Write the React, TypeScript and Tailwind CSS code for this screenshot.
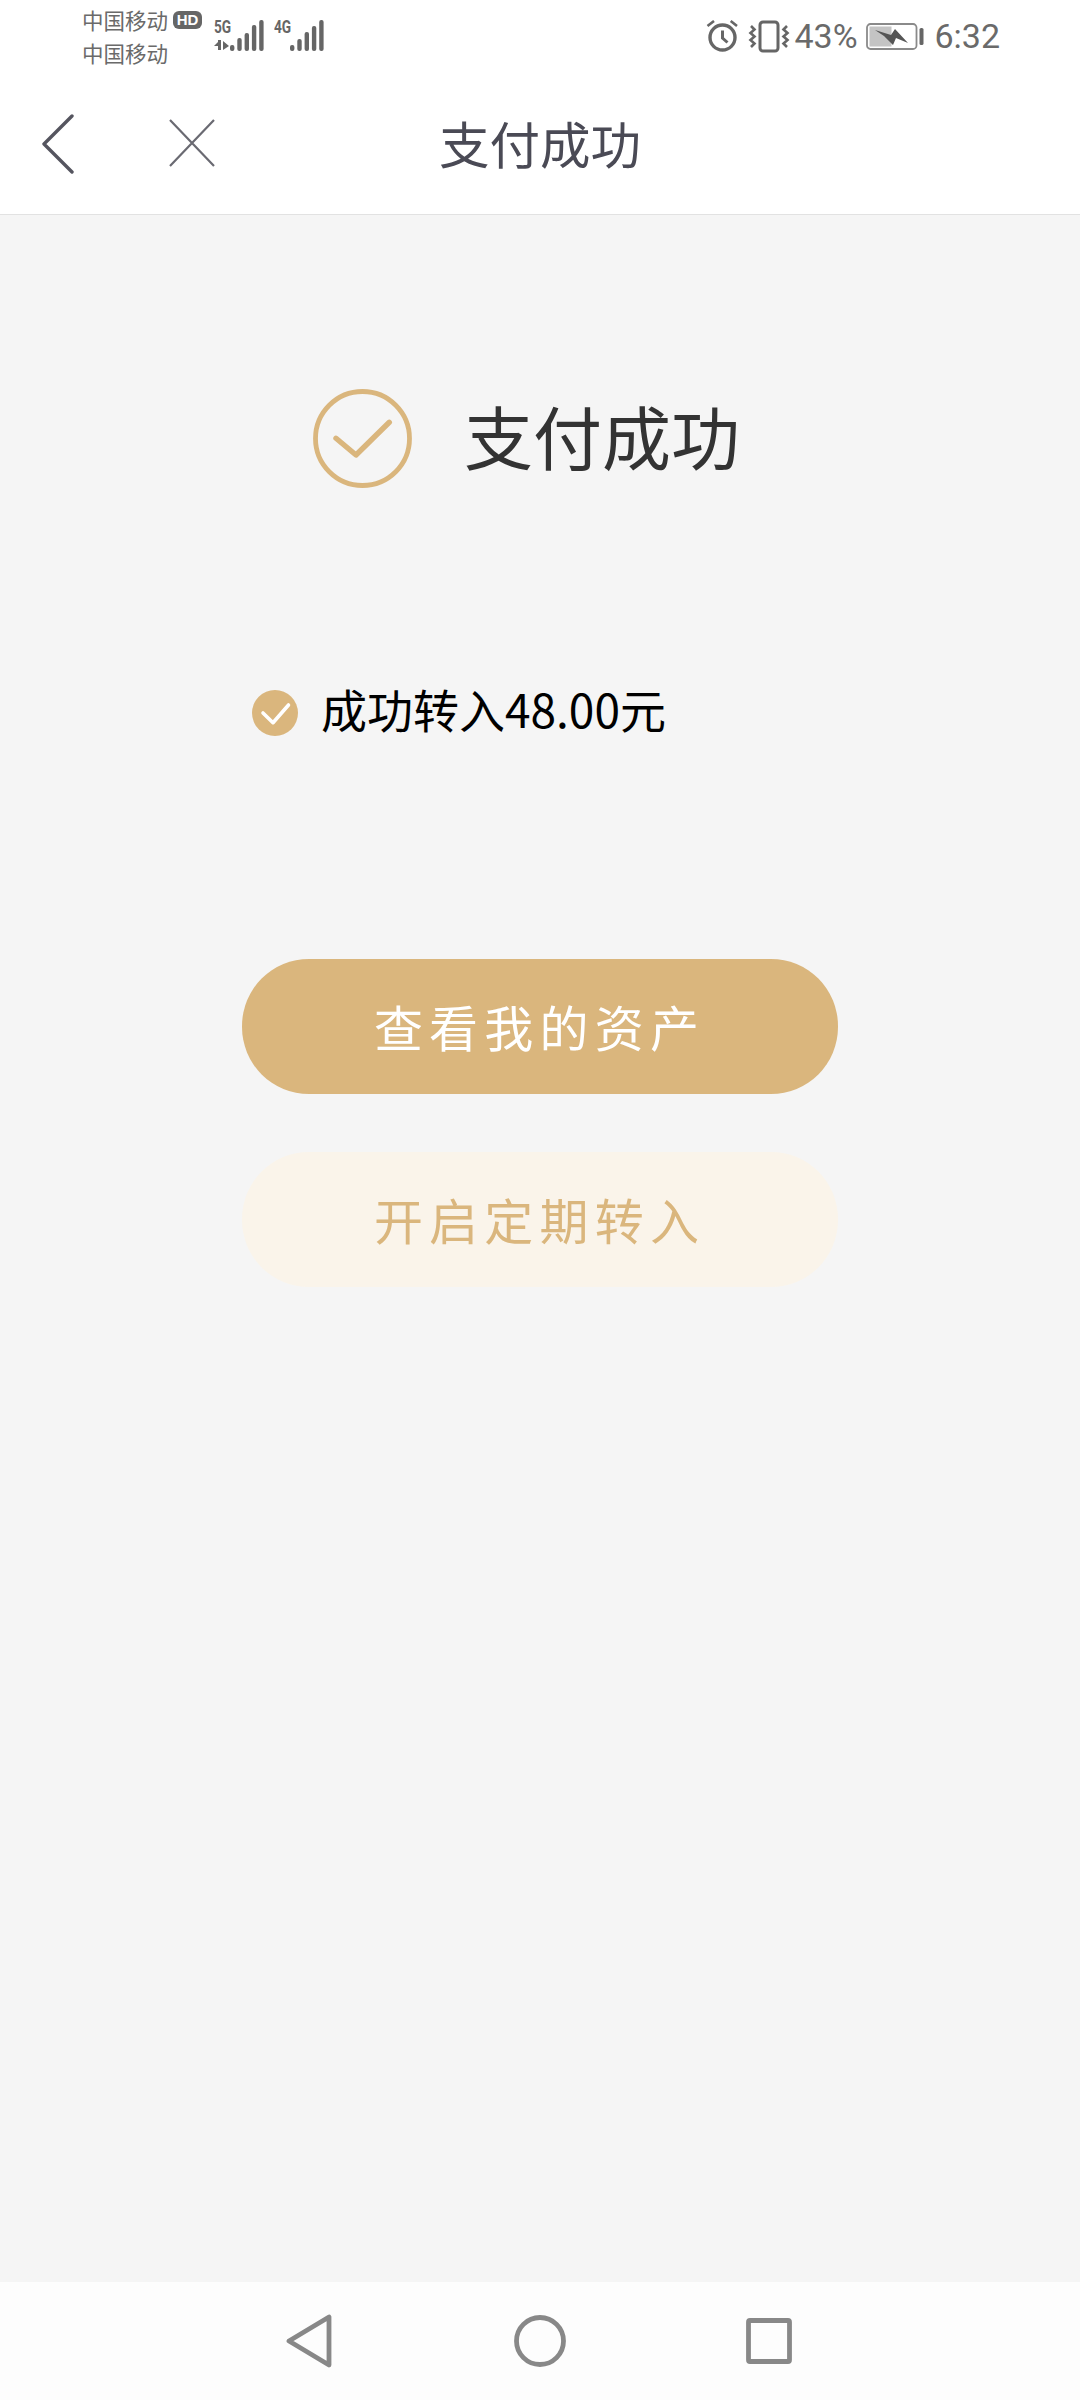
import * as React from "react";

const cjk = "font-['Noto_Sans_CJK_SC','Noto_Sans',sans-serif]";

function SignalBars({ tops, offset }: { tops: number[]; offset: number }) {
  return (
    <svg width="36" height="32" viewBox="0 0 36 32" className="block">
      {tops.map((top, i) => (
        <rect key={i} x={offset + i * 7.3} y={top} width="4.4" height={31 - top} rx="2" fill="#666" />
      ))}
    </svg>
  );
}

function NetworkLabel({ label, arrows }: { label: string; arrows?: boolean }) {
  return (
    <div className="flex h-[32px] w-[16px] flex-col">
      <span className="block origin-left scale-x-[0.76] font-['Roboto',sans-serif] text-[18px] leading-[14px] font-bold whitespace-nowrap text-[#666]">
        {label}
      </span>
      {arrows && (
        <svg width="16" height="11" viewBox="0 0 16 11" className="mt-[6px] block" fill="#666">
          <rect x="4" y="0" width="3" height="10" />
          <path d="M0 6l4-4v4zM9 1l6 5-6 4z" />
        </svg>
      )}
    </div>
  );
}

function StatusBar() {
  return (
    <div className="flex h-[70px] items-start justify-between bg-white pl-[82px] pr-[80px] text-[#6a6a6a]">
      <div className="flex">
        <div className={`flex w-[132px] flex-col pt-[3px] text-[21.5px] leading-[33px] ${cjk}`}>
          <div className="flex items-center">
            中国移动
            <span className="ml-[5px] flex h-[18px] w-[29px] items-center justify-center rounded-[6px] bg-[#666] font-['Liberation_Sans',sans-serif] text-[15px] leading-none font-bold text-white">
              HD
            </span>
          </div>
          <div>中国移动</div>
        </div>
        <div className="flex pt-[20px]">
          <NetworkLabel label="5G" arrows />
          <SignalBars tops={[25, 18, 13, 5, 0]} offset={0} />
          <div className="w-[8px]" />
          <NetworkLabel label="4G" />
          <SignalBars tops={[25, 19, 12, 6, 0]} offset={0} />
        </div>
      </div>
      <div className="flex items-start pt-[20px]">
        <svg width="32" height="33" viewBox="0 0 32 33" fill="none" stroke="#666" strokeWidth="3.4" className="block">
          <circle cx="16.5" cy="17.5" r="12.5" />
          <path d="M16.5 10.5v7.5l5 4.5" strokeWidth="3" />
          <path d="M1.5 6 8 1M31 6 24.7 1" strokeWidth="2.6" />
        </svg>
        <svg width="42" height="33" viewBox="0 0 42 33" fill="none" stroke="#666" className="ml-[10px] block">
          <rect x="12" y="2" width="18" height="29" rx="3" strokeWidth="3" />
          <path d="M3 6l3.5 3.5-4 3.5 4 3.5-4 3.5 4 3.5L3 27" strokeWidth="2.6" />
          <path d="M39 6l-3.5 3.5 4 3.5-4 3.5 4 3.5-4 3.5L39 27" strokeWidth="2.6" />
        </svg>
        <span className="ml-[4px] w-[61px] font-['Roboto',sans-serif] text-[34px] leading-[32px] whitespace-nowrap">43%</span>
        <svg width="58" height="27" viewBox="0 0 58 27" className="mt-[3px] ml-[11px] block">
          <rect x="1" y="1" width="49.5" height="25" rx="3.5" fill="none" stroke="#8a8a8a" strokeWidth="1.8" />
          <rect x="3.5" y="3.5" width="22" height="20" fill="#c4c4c4" />
          <path d="M9 7 25 12 29 6 42 20 30 15 27 22 18 13z" fill="#555" />
          <rect x="53.5" y="5" width="4" height="17" rx="1.6" fill="#666" />
        </svg>
        <span className="ml-[10px] font-['Roboto',sans-serif] text-[34px] leading-[32px]">6:32</span>
      </div>
    </div>
  );
}

function Header() {
  return (
    <div className="grid h-[145px] grid-cols-[1fr_auto_1fr] items-center border-b border-[#e2e2e2] bg-white">
      <div className="flex items-center pl-[42px]">
        <svg width="32" height="60" viewBox="0 0 32 60" fill="none" stroke="#55555f" strokeWidth="3.4" strokeLinecap="round" strokeLinejoin="round" className="mt-[3px] block">
          <path d="M30 2 2 30l28 28" />
        </svg>
        <svg width="46" height="48" viewBox="0 0 46 48" fill="none" stroke="#6a6a72" strokeWidth="2.2" className="mt-[2px] ml-[95px] block">
          <path d="M1 1l44 46M45 1 1 47" />
        </svg>
      </div>
      <div className={`text-[50.5px] leading-none text-[#4a4a55] ${cjk}`}>支付成功</div>
      <div />
    </div>
  );
}

function PillButton({ label, primary }: { label: string; primary?: boolean }) {
  return (
    <button
      className={`flex h-[135px] w-[596px] items-center justify-center rounded-[67px] pb-[3px] text-[49px] leading-none tracking-[6.2px] ${cjk} ${
        primary ? "bg-[#dab67d] text-white" : "bg-[#faf4ea] text-[#dab67d]"
      }`}
    >
      {label}
    </button>
  );
}

function BottomNav() {
  return (
    <div className="flex h-[118px] items-center bg-[#fdfdfd] pl-[286px]">
      <svg width="46" height="54" viewBox="0 0 46 54" fill="none" stroke="#888" strokeWidth="4.8" strokeLinejoin="round" className="block">
        <path d="M43 3v48L3 27z" />
      </svg>
      <svg width="52" height="52" viewBox="0 0 52 52" fill="none" stroke="#888" strokeWidth="4.8" className="ml-[182px] block">
        <circle cx="26" cy="26" r="23.5" />
      </svg>
      <svg width="46" height="46" viewBox="0 0 46 46" fill="none" stroke="#888" strokeWidth="4.8" strokeLinejoin="round" className="ml-[180px] block">
        <rect x="2.5" y="2.5" width="41" height="41" rx="1.5" />
      </svg>
    </div>
  );
}

export default function App() {
  return (
    <div className="flex h-[2400px] w-[1080px] flex-col bg-[#f5f5f5]">
      <StatusBar />
      <Header />
      <main className="flex flex-1 flex-col pt-[174px]">
        <div className="flex items-center pl-[313px]">
          <svg width="99" height="99" viewBox="0 0 99 99" fill="none" stroke="#dab67d" strokeWidth="4.8" strokeLinecap="round" strokeLinejoin="round" className="block">
            <circle cx="49.5" cy="49.5" r="47" />
            <path d="M23 49.3 43 66 76.3 33.3" strokeWidth="5.4" />
          </svg>
          <span className={`ml-[52px] pb-[6px] text-[69px] leading-none text-[#333] ${cjk}`}>支付成功</span>
        </div>
        <div className="mt-[202px] flex h-[46px] items-start pl-[252px]">
          <svg width="46" height="46" viewBox="0 0 46 46" className="block">
            <circle cx="23" cy="23" r="23" fill="#dab67d" />
            <path d="M11 23l10 9.7L36.5 15" fill="none" stroke="#fff" strokeWidth="3.6" strokeLinecap="round" strokeLinejoin="round" />
          </svg>
          <span className={`ml-[23px] text-[46px] leading-[37px] text-black ${cjk}`}>成功转入48.00元</span>
        </div>
        <div className="mt-[223px] flex flex-col items-center gap-[58px] pr-[1px]">
          <PillButton label="查看我的资产" primary />
          <PillButton label="开启定期转入" />
        </div>
      </main>
      <BottomNav />
    </div>
  );
}
